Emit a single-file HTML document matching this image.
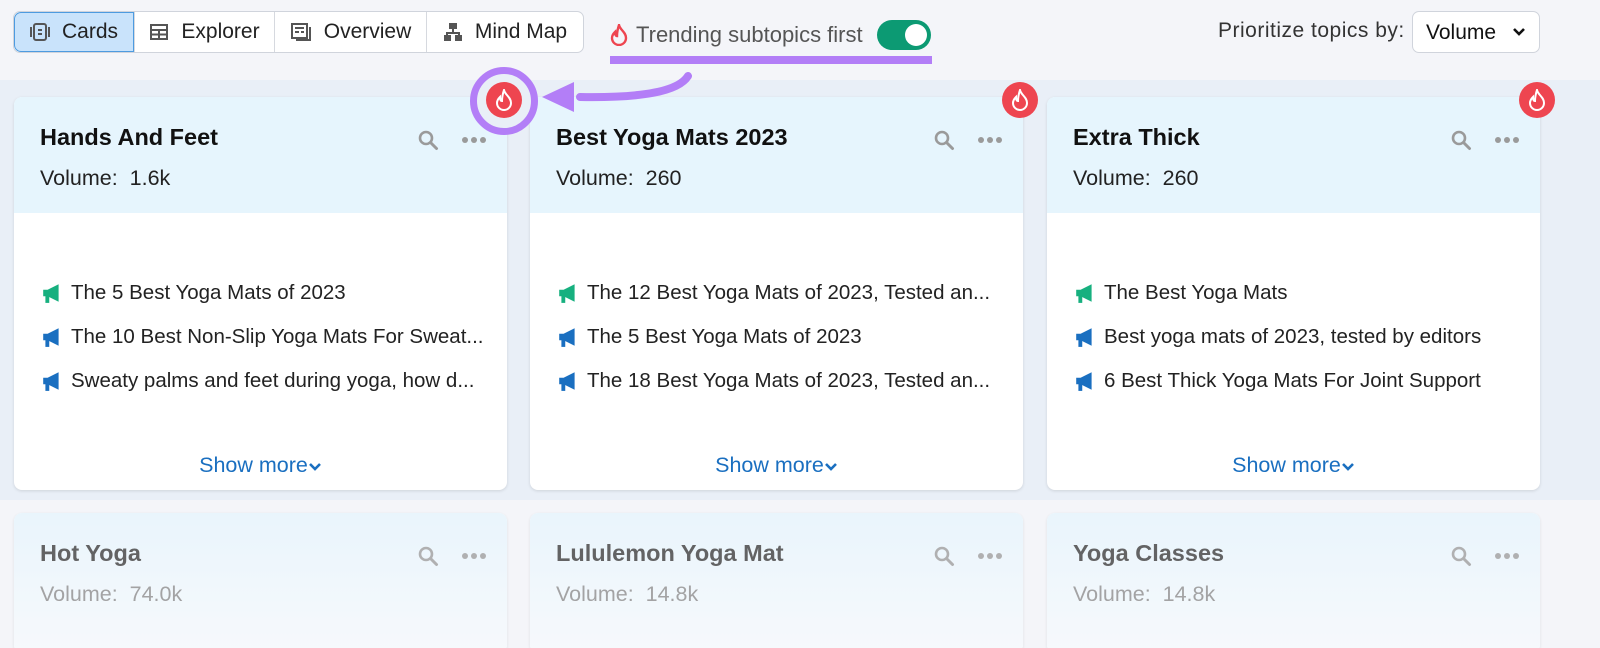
<!DOCTYPE html>
<html><head><style>
*{box-sizing:border-box;margin:0;padding:0}
html,body{width:1600px;height:648px;overflow:hidden}
body{background:#f4f5f9;font-family:"Liberation Sans",sans-serif;position:relative}
.tabs{position:absolute;left:13px;top:11px;height:42px;display:flex;border:1px solid #d0d4dc;border-radius:7px;background:#fff;overflow:hidden}
.tab{display:flex;align-items:center;justify-content:center;font-size:21px;color:#222;border-left:1px solid #d6d9df;gap:12px}
.tab:first-child{border-left:none;background:#c9e3fb;border:1px solid #4d9be0;border-radius:7px 0 0 7px}
.band{position:absolute;left:0;top:80px;width:1600px;height:420px;background:#e9eff7}
.card{position:absolute;width:493px;height:393px;background:#fff;border-radius:8px;box-shadow:0 1px 3px rgba(0,0,0,.12);overflow:hidden}
.hd{height:116px;background:#e6f5fd;padding:27px 26px 0 26px;position:relative}
.t{font-size:23.5px;font-weight:bold;color:#111}
.v{font-size:21.5px;color:#222;margin-top:15px}
.ic{position:absolute;top:32px;right:20px;display:flex;gap:22px;align-items:center}
.li{font-size:20.5px;color:#222;display:flex;align-items:center;gap:8px;margin-left:27px;height:44px}
.sm{position:absolute;bottom:12px;width:100%;text-align:center;font-size:21.5px;color:#1a6fc0}
.badge{position:absolute;width:36px;height:36px;border-radius:50%;background:#ee4550;display:flex;align-items:center;justify-content:center}
.fade{opacity:.75;height:140px}
.fade .hd{background:linear-gradient(#e6f5fd,#f8fbfe);height:140px}
</style></head><body>
<div class="tabs">
<div class="tab" style="width:120px"><svg width="20" height="20" viewBox="0 0 20 20" fill="none" stroke="#555" stroke-width="2"><rect x="4" y="2" width="12" height="16" rx="2"/><path d="M1 5v10M19 5v10M8 8h4M8 12h4"/></svg>Cards</div>
<div class="tab" style="width:140px"><svg width="20" height="20" viewBox="0 0 20 20" fill="none" stroke="#555" stroke-width="2"><rect x="2" y="3" width="16" height="14"/><path d="M2 8h16M2 12.5h16M10 8v9"/></svg>Explorer</div>
<div class="tab" style="width:152px"><svg width="22" height="20" viewBox="0 0 22 20" fill="none" stroke="#555" stroke-width="2"><rect x="2" y="2" width="15" height="14"/><path d="M5 6h9M5 10h4M11 10h3M20 5v13H6"/></svg>Overview</div>
<div class="tab" style="width:157px"><svg width="20" height="20" viewBox="0 0 20 20" fill="#555"><rect x="6" y="1" width="8" height="6"/><rect x="1" y="13" width="7" height="6"/><rect x="12" y="13" width="7" height="6"/><path d="M9 7h2v3h6v3h-2v-1H5v1H3v-3h6z"/></svg>Mind Map</div>
</div>
<div style="position:absolute;left:610px;top:20px;display:flex;align-items:center;gap:8px;font-size:22px;color:#555">
<svg width="18" height="22" viewBox="0 0 18 22"><path d="M9 1C10 6 16 8 16 14a7 7 0 0 1-14 0c0-3 2-5 3-6 0 3 1 4 2 4C7 8 8 4 9 1z" fill="none" stroke="#ee4550" stroke-width="2.4"/></svg>
Trending subtopics first
<div style="width:54px;height:30px;border-radius:15px;background:#0c9a73;margin-left:6px;position:relative"><div style="position:absolute;right:4px;top:4px;width:22px;height:22px;border-radius:50%;background:#fff"></div></div>
</div>
<div style="position:absolute;left:610px;top:56px;width:322px;height:8px;background:#b37ef7"></div>
<div style="position:absolute;left:1218px;top:19px;font-size:21px;color:#333;letter-spacing:0.5px">Prioritize topics by:</div>
<div style="position:absolute;left:1412px;top:11px;width:128px;height:42px;background:#fff;border:1px solid #d0d4dc;border-radius:7px;font-size:21px;color:#111;padding:9px 13px">Volume <svg style="position:absolute;right:13px;top:15px" width="14" height="10" viewBox="0 0 14 10"><path d="M2 2l5 5 5-5" fill="none" stroke="#111" stroke-width="2.6"/></svg></div>
<div class="band"></div>

<svg width="0" height="0" style="position:absolute"><defs>
<symbol id="mg" viewBox="0 0 20 20"><path d="M2 7h4l10-5v16L6 13H2z" /><rect x="4" y="12" width="3.5" height="7"/></symbol>
<symbol id="sr" viewBox="0 0 22 22"><circle cx="9" cy="9" r="6" fill="none" stroke="#9a9a9a" stroke-width="2.6"/><path d="M13.5 13.5l6 6" stroke="#9a9a9a" stroke-width="3" stroke-linecap="round"/></symbol>
<symbol id="dt" viewBox="0 0 26 8"><circle cx="4" cy="4" r="3" fill="#9a9a9a"/><circle cx="13" cy="4" r="3" fill="#9a9a9a"/><circle cx="22" cy="4" r="3" fill="#9a9a9a"/></symbol>
<symbol id="ch" viewBox="0 0 14 10"><path d="M2 2l5 5 5-5" fill="none" stroke="#1a6fc0" stroke-width="2.6"/></symbol>
</defs></svg>

<div class="card" style="left:14px;top:97px"><div class="hd"><div class="t">Hands And Feet</div><div class="v">Volume:&nbsp; 1.6k</div><div class="ic"><svg width="22" height="22"><use href="#sr"/></svg><svg width="26" height="8"><use href="#dt"/></svg></div></div>
<div style="height:58px"></div>
<div class="li"><svg width="22" height="22" fill="#17b07f"><use href="#mg"/></svg>The 5 Best Yoga Mats of 2023</div>
<div class="li"><svg width="22" height="22" fill="#1a6fc0"><use href="#mg"/></svg>The 10 Best Non-Slip Yoga Mats For Sweat...</div>
<div class="li"><svg width="22" height="22" fill="#1a6fc0"><use href="#mg"/></svg>Sweaty palms and feet during yoga, how d...</div>
<div class="sm">Show more<svg width="14" height="10"><use href="#ch"/></svg></div></div>

<div class="card" style="left:530px;top:97px"><div class="hd"><div class="t">Best Yoga Mats 2023</div><div class="v">Volume:&nbsp; 260</div><div class="ic"><svg width="22" height="22"><use href="#sr"/></svg><svg width="26" height="8"><use href="#dt"/></svg></div></div>
<div style="height:58px"></div>
<div class="li"><svg width="22" height="22" fill="#17b07f"><use href="#mg"/></svg>The 12 Best Yoga Mats of 2023, Tested an...</div>
<div class="li"><svg width="22" height="22" fill="#1a6fc0"><use href="#mg"/></svg>The 5 Best Yoga Mats of 2023</div>
<div class="li"><svg width="22" height="22" fill="#1a6fc0"><use href="#mg"/></svg>The 18 Best Yoga Mats of 2023, Tested an...</div>
<div class="sm">Show more<svg width="14" height="10"><use href="#ch"/></svg></div></div>

<div class="card" style="left:1047px;top:97px"><div class="hd"><div class="t">Extra Thick</div><div class="v">Volume:&nbsp; 260</div><div class="ic"><svg width="22" height="22"><use href="#sr"/></svg><svg width="26" height="8"><use href="#dt"/></svg></div></div>
<div style="height:58px"></div>
<div class="li"><svg width="22" height="22" fill="#17b07f"><use href="#mg"/></svg>The Best Yoga Mats</div>
<div class="li"><svg width="22" height="22" fill="#1a6fc0"><use href="#mg"/></svg>Best yoga mats of 2023, tested by editors</div>
<div class="li"><svg width="22" height="22" fill="#1a6fc0"><use href="#mg"/></svg>6 Best Thick Yoga Mats For Joint Support</div>
<div class="sm">Show more<svg width="14" height="10"><use href="#ch"/></svg></div></div>

<div class="card fade" style="left:14px;top:513px"><div class="hd"><div class="t" style="color:#333">Hot Yoga</div><div class="v" style="color:#888">Volume:&nbsp; 74.0k</div><div class="ic"><svg width="22" height="22"><use href="#sr"/></svg><svg width="26" height="8"><use href="#dt"/></svg></div></div></div>
<div class="card fade" style="left:530px;top:513px"><div class="hd"><div class="t" style="color:#333">Lululemon Yoga Mat</div><div class="v" style="color:#888">Volume:&nbsp; 14.8k</div><div class="ic"><svg width="22" height="22"><use href="#sr"/></svg><svg width="26" height="8"><use href="#dt"/></svg></div></div></div>
<div class="card fade" style="left:1047px;top:513px"><div class="hd"><div class="t" style="color:#333">Yoga Classes</div><div class="v" style="color:#888">Volume:&nbsp; 14.8k</div><div class="ic"><svg width="22" height="22"><use href="#sr"/></svg><svg width="26" height="8"><use href="#dt"/></svg></div></div></div>

<div style="position:absolute;left:470px;top:67px;width:68px;height:68px;border-radius:50%;border:7px solid #b37ef7;background:#e9eff7"></div>
<div class="badge" style="left:486px;top:82px"><svg width="18" height="22" viewBox="0 0 18 22"><path d="M9 1C10 6 16 8 16 14a7 7 0 0 1-14 0c0-3 2-5 3-6 0 3 1 4 2 4C7 8 8 4 9 1z" fill="none" stroke="#fff" stroke-width="2"/></svg></div>
<div class="badge" style="left:1002px;top:82px"><svg width="18" height="22" viewBox="0 0 18 22"><path d="M9 1C10 6 16 8 16 14a7 7 0 0 1-14 0c0-3 2-5 3-6 0 3 1 4 2 4C7 8 8 4 9 1z" fill="none" stroke="#fff" stroke-width="2"/></svg></div>
<div class="badge" style="left:1519px;top:82px"><svg width="18" height="22" viewBox="0 0 18 22"><path d="M9 1C10 6 16 8 16 14a7 7 0 0 1-14 0c0-3 2-5 3-6 0 3 1 4 2 4C7 8 8 4 9 1z" fill="none" stroke="#fff" stroke-width="2"/></svg></div>
<svg style="position:absolute;left:540px;top:66px" width="160" height="50" viewBox="0 0 160 50"><path d="M148 10C138 26 100 32 40 31" fill="none" stroke="#b37ef7" stroke-width="8" stroke-linecap="round"/><path d="M2 31L34 16L34 46Z" fill="#b37ef7"/></svg>
</body></html>
